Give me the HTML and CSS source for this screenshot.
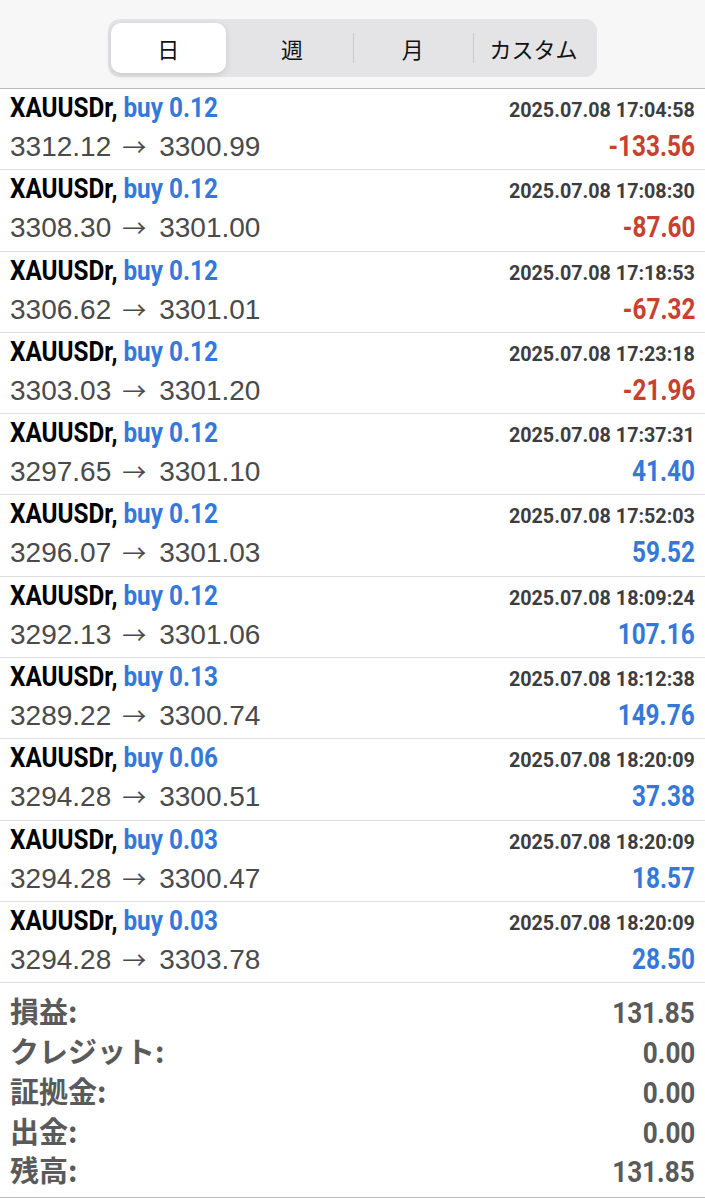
FILE: index.html
```html
<!DOCTYPE html>
<html lang="ja">

<head>
    <meta charset="UTF-8">
    <meta name="viewport" content="width=device-width, initial-scale=1.0">
    <title>履歴</title>
    <link rel="stylesheet" href="styles.css">
</head>

<body>
    <header class="top-bar">
        <div class="segments">
            <div class="segment active">日</div>
            <div class="segment">週</div>
            <div class="segment">月</div>
            <div class="segment">カスタム</div>
        </div>
    </header>

    <div class="deals">
        <div class="deal">
            <div class="deal-line">
                <span class="title"><span class="symbol">XAUUSDr,</span> <span class="side">buy 0.12</span></span>
                <span class="time">2025.07.08 17:04:58</span>
            </div>
            <div class="deal-line">
                <span class="prices">3312.12<span class="arrow">→</span>3300.99</span>
                <span class="profit loss">-133.56</span>
            </div>
        </div>
        <div class="deal">
            <div class="deal-line">
                <span class="title"><span class="symbol">XAUUSDr,</span> <span class="side">buy 0.12</span></span>
                <span class="time">2025.07.08 17:08:30</span>
            </div>
            <div class="deal-line">
                <span class="prices">3308.30<span class="arrow">→</span>3301.00</span>
                <span class="profit loss">-87.60</span>
            </div>
        </div>
        <div class="deal">
            <div class="deal-line">
                <span class="title"><span class="symbol">XAUUSDr,</span> <span class="side">buy 0.12</span></span>
                <span class="time">2025.07.08 17:18:53</span>
            </div>
            <div class="deal-line">
                <span class="prices">3306.62<span class="arrow">→</span>3301.01</span>
                <span class="profit loss">-67.32</span>
            </div>
        </div>
        <div class="deal">
            <div class="deal-line">
                <span class="title"><span class="symbol">XAUUSDr,</span> <span class="side">buy 0.12</span></span>
                <span class="time">2025.07.08 17:23:18</span>
            </div>
            <div class="deal-line">
                <span class="prices">3303.03<span class="arrow">→</span>3301.20</span>
                <span class="profit loss">-21.96</span>
            </div>
        </div>
        <div class="deal">
            <div class="deal-line">
                <span class="title"><span class="symbol">XAUUSDr,</span> <span class="side">buy 0.12</span></span>
                <span class="time">2025.07.08 17:37:31</span>
            </div>
            <div class="deal-line">
                <span class="prices">3297.65<span class="arrow">→</span>3301.10</span>
                <span class="profit">41.40</span>
            </div>
        </div>
        <div class="deal">
            <div class="deal-line">
                <span class="title"><span class="symbol">XAUUSDr,</span> <span class="side">buy 0.12</span></span>
                <span class="time">2025.07.08 17:52:03</span>
            </div>
            <div class="deal-line">
                <span class="prices">3296.07<span class="arrow">→</span>3301.03</span>
                <span class="profit">59.52</span>
            </div>
        </div>
        <div class="deal">
            <div class="deal-line">
                <span class="title"><span class="symbol">XAUUSDr,</span> <span class="side">buy 0.12</span></span>
                <span class="time">2025.07.08 18:09:24</span>
            </div>
            <div class="deal-line">
                <span class="prices">3292.13<span class="arrow">→</span>3301.06</span>
                <span class="profit">107.16</span>
            </div>
        </div>
        <div class="deal">
            <div class="deal-line">
                <span class="title"><span class="symbol">XAUUSDr,</span> <span class="side">buy 0.13</span></span>
                <span class="time">2025.07.08 18:12:38</span>
            </div>
            <div class="deal-line">
                <span class="prices">3289.22<span class="arrow">→</span>3300.74</span>
                <span class="profit">149.76</span>
            </div>
        </div>
        <div class="deal">
            <div class="deal-line">
                <span class="title"><span class="symbol">XAUUSDr,</span> <span class="side">buy 0.06</span></span>
                <span class="time">2025.07.08 18:20:09</span>
            </div>
            <div class="deal-line">
                <span class="prices">3294.28<span class="arrow">→</span>3300.51</span>
                <span class="profit">37.38</span>
            </div>
        </div>
        <div class="deal">
            <div class="deal-line">
                <span class="title"><span class="symbol">XAUUSDr,</span> <span class="side">buy 0.03</span></span>
                <span class="time">2025.07.08 18:20:09</span>
            </div>
            <div class="deal-line">
                <span class="prices">3294.28<span class="arrow">→</span>3300.47</span>
                <span class="profit">18.57</span>
            </div>
        </div>
        <div class="deal">
            <div class="deal-line">
                <span class="title"><span class="symbol">XAUUSDr,</span> <span class="side">buy 0.03</span></span>
                <span class="time">2025.07.08 18:20:09</span>
            </div>
            <div class="deal-line">
                <span class="prices">3294.28<span class="arrow">→</span>3303.78</span>
                <span class="profit">28.50</span>
            </div>
        </div>
    </div>

    <div class="summary">
        <div class="summary-row">
            <span class="summary-label">損益:</span>
            <span class="summary-value">131.85</span>
        </div>
        <div class="summary-row">
            <span class="summary-label">クレジット:</span>
            <span class="summary-value">0.00</span>
        </div>
        <div class="summary-row">
            <span class="summary-label">証拠金:</span>
            <span class="summary-value">0.00</span>
        </div>
        <div class="summary-row">
            <span class="summary-label">出金:</span>
            <span class="summary-value">0.00</span>
        </div>
        <div class="summary-row">
            <span class="summary-label">残高:</span>
            <span class="summary-value">131.85</span>
        </div>
    </div>
</body>

</html>
```

FILE: styles.css
```css
:root {
    --bar-color: #f7f7f7;
    --segment-bg: #e4e4e7;
    --line-color: #dedede;
    --header-line: #bcbcbc;
    --text-color: #000000;
    --muted-color: #4a4a4a;
    --time-color: #3d3d3f;
    --summary-color: #5a5a5a;
    --blue: #3479d9;
    --red: #c8412f;
    --bold-font: "Roboto", "Liberation Sans", sans-serif;
}

body {
    margin: 0;
    background: #ffffff;
    color: var(--text-color);
    font-family: "Liberation Sans", Arial, sans-serif;
}

/* top segmented control */
.top-bar {
    background: var(--bar-color);
    padding: 19px 0 11px;
    border-bottom: 1px solid var(--header-line);
    display: flex;
    justify-content: center;
}

.segments {
    width: 489px;
    height: 58px;
    box-sizing: border-box;
    padding: 4px 3px;
    background: var(--segment-bg);
    border-radius: 12px;
    display: grid;
    grid-template-columns: repeat(4, 1fr);
}

.segment {
    display: flex;
    align-items: center;
    justify-content: center;
    font-family: "Noto Sans CJK JP", sans-serif;
    font-size: 22px;
    color: #111111;
    position: relative;
}

.segment + .segment::before {
    content: "";
    position: absolute;
    left: 0;
    top: 10px;
    bottom: 10px;
    width: 1px;
    background: #c9c9cc;
}

.segment.active,
.segment.active + .segment::before {
    background: transparent;
}

.segment.active {
    background: #ffffff;
    border-radius: 10px;
    margin-right: 6px;
    box-shadow: 0 2px 6px rgb(0 0 0 / 0.12);
}

/* deal list */
.deal {
    padding: 2px 10px 2.3px;
    border-bottom: 1px solid var(--line-color);
}

.deal-line {
    display: flex;
    justify-content: space-between;
    align-items: baseline;
}

.deal-line:first-child {
    height: 34px;
    line-height: 34px;
}

.deal-line:last-child {
    height: 42px;
    line-height: 42px;
}

/* the app uses a condensed bold face, squeeze Roboto to match */
.title,
.time,
.profit,
.summary-value {
    display: inline-block;
    font-family: var(--bold-font);
    font-weight: bold;
}

.title {
    font-size: 27px;
    transform: scaleX(0.9);
    transform-origin: left;
}

.side {
    color: var(--blue);
}

.time {
    font-size: 21px;
    color: var(--time-color);
    transform: scaleX(0.94);
    transform-origin: right;
}

.prices {
    font-size: 28px;
    color: var(--muted-color);
}

.arrow {
    font-family: "Noto Sans CJK JP", sans-serif;
    font-size: 24px;
    margin: 0 13px 0 11px;
}

.profit {
    font-size: 29px;
    color: var(--blue);
    transform: scaleX(0.84);
    transform-origin: right;
}

.profit.loss {
    color: var(--red);
}

/* totals */
.summary {
    padding: 8px 10px 7px;
    border-bottom: 1px solid var(--header-line);
}

.summary-row {
    display: flex;
    justify-content: space-between;
    align-items: baseline;
    height: 39.75px;
    line-height: 39.75px;
    color: var(--summary-color);
}

.summary-label {
    font-family: "Noto Sans CJK JP", sans-serif;
    font-weight: bold;
    font-size: 29px;
}

.summary-value {
    font-size: 29px;
    transform: scaleX(0.9);
    transform-origin: right;
}
```
